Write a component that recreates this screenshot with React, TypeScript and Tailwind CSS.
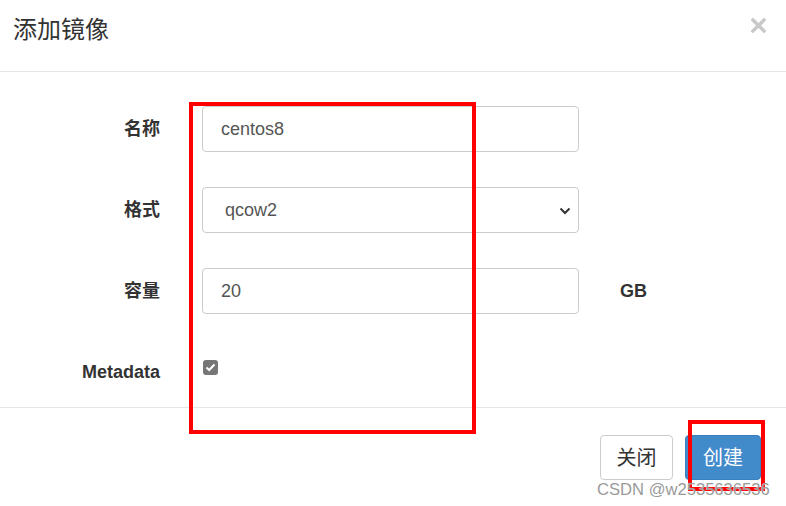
import React from 'react';

const font = { fontFamily: '"Liberation Sans", "Noto Sans CJK SC", sans-serif' };

const Row: React.FC<{ label: string; children: React.ReactNode; suffix?: string }> = ({ label, children, suffix }) => (
    <div className="flex items-center h-[46px]">
        <label className="w-[161px] text-right text-[18px] font-bold text-[#333] pr-px">{label}</label>
        <div className="ml-[41px] w-[377px] h-full">{children}</div>
        {suffix && <span className="ml-[41px] text-[18px] font-bold text-[#333]">{suffix}</span>}
    </div>
);

const App: React.FC = () => {
    return (
        <div className="relative w-[786px] h-[506px] bg-white overflow-hidden" style={font}>
            {/* header */}
            <div className="h-[72px] border-b border-[#e5e5e5] flex items-center justify-between pl-[13px] pr-[20px]">
                <h4 className="text-[24px] text-[#333] font-normal -mt-[12px]">添加镜像</h4>
                <svg width="15" height="15" viewBox="0 0 15 15" className="-mt-[20px]">
                    <path d="M2 2 L13 13 M13 2 L2 13" stroke="#c9c9c9" strokeWidth="3.4" strokeLinecap="square" />
                </svg>
            </div>

            {/* body */}
            <div className="h-[335px] pt-[34px] flex flex-col gap-[35px]">
                <Row label="名称">
                    <input
                        defaultValue="centos8"
                        className="w-full h-full border border-[#ccc] rounded-[4px] pl-[18px] text-[18px] text-[#555] outline-none"
                        style={font}
                    />
                </Row>
                <Row label="格式">
                    <div className="relative w-full h-full">
                        <select
                            defaultValue="qcow2"
                            className="appearance-none w-full h-full border border-[#ccc] rounded-[4px] pl-[22px] text-[18px] text-[#555] bg-white outline-none"
                            style={font}
                        >
                            <option value="qcow2">qcow2</option>
                            <option value="raw">raw</option>
                        </select>
                        <svg width="12" height="8" viewBox="0 0 12 8" className="absolute right-[8px] top-[20px] pointer-events-none">
                            <path d="M1.5 1.5 L6 6 L10.5 1.5" stroke="#333" strokeWidth="2" fill="none" />
                        </svg>
                    </div>
                </Row>
                <Row label="容量" suffix="GB">
                    <input
                        defaultValue="20"
                        className="w-full h-full border border-[#ccc] rounded-[4px] pl-[18px] text-[18px] text-[#555] outline-none"
                        style={font}
                    />
                </Row>
                <Row label="Metadata">
                    <div className="pt-[11px] pl-px">
                        <div className="w-[15px] h-[15px] rounded-[3px] bg-[#767676] flex items-center justify-center">
                            <svg width="11" height="9" viewBox="0 0 11 9">
                                <path d="M1.5 4.5 L4.2 7 L9.5 1.5" stroke="#fff" strokeWidth="2" fill="none" />
                            </svg>
                        </div>
                    </div>
                </Row>
            </div>

            {/* footer */}
            <div className="border-t border-[#e5e5e5] flex justify-end gap-[12px] pt-[27px] pr-[25px]">
                <button className="w-[73px] h-[45px] border border-[#ccc] rounded-[4px] bg-white text-[20px] text-[#333]" style={font}>关闭</button>
                <button className="w-[76px] h-[45px] border border-[#3a80c0] rounded-[4px] bg-[#428bca] text-[20px] text-white" style={font}>创建</button>
            </div>

            {/* annotations */}
            <div className="absolute left-[189px] top-[102px] w-[287px] h-[332px] border-[4px] border-[#ff0000] pointer-events-none" />
            <div className="absolute left-[688px] top-[420px] w-[77px] h-[71px] border-[4px] border-[#ff0000] pointer-events-none" />
            <div className="absolute left-[597px] top-[482px] text-[16.6px] text-[#9a9a9a] leading-none whitespace-nowrap pointer-events-none" style={{ ...font, textShadow: '0 0 1px #fff' }}>
                CSDN @w2535636536
            </div>
        </div>
    );
};

export default App;
